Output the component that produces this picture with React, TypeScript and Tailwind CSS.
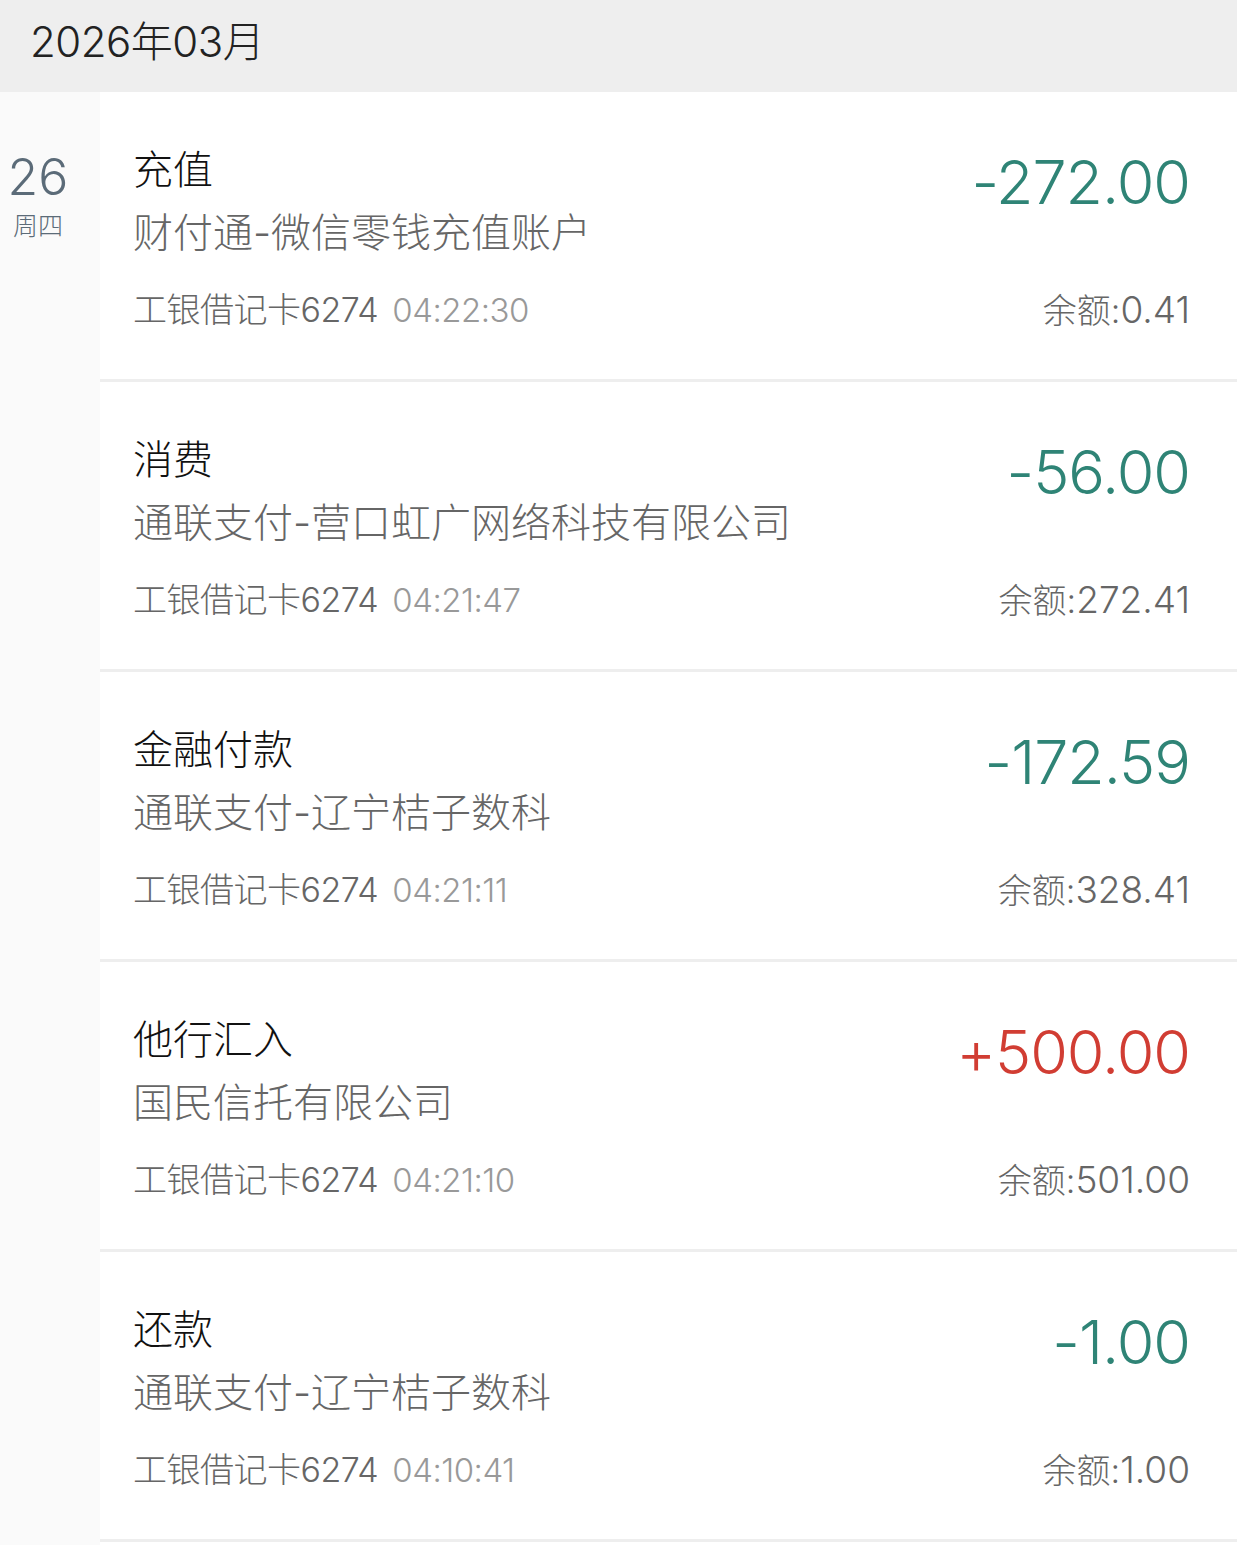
import React from "react";

type Tx = {
  title: string;
  sub: string;
  time: string;
  amount: string;
  balance: string;
  income?: boolean;
};

const txs: Tx[] = [
  { title: "充值", sub: "财付通-微信零钱充值账户", time: "04:22:30", amount: "-272.00", balance: "0.41" },
  { title: "消费", sub: "通联支付-营口虹广网络科技有限公司", time: "04:21:47", amount: "-56.00", balance: "272.41" },
  { title: "金融付款", sub: "通联支付-辽宁桔子数科", time: "04:21:11", amount: "-172.59", balance: "328.41" },
  { title: "他行汇入", sub: "国民信托有限公司", time: "04:21:10", amount: "+500.00", balance: "501.00", income: true },
  { title: "还款", sub: "通联支付-辽宁桔子数科", time: "04:10:41", amount: "-1.00", balance: "1.00" },
];

const font = { fontFamily: 'Inter, "Noto Sans CJK SC", sans-serif' };

export default function App() {
  return (
    <div className="w-[1237px] h-[1545px] bg-white overflow-hidden" style={font}>
      <div className="h-[92px] bg-[#eeeeee] flex items-center pl-[30px] pb-[10px] text-[42px] text-[#222222] font-light tracking-[-0.5px]">
        2026年03月
      </div>
      <div className="flex">
        <div className="w-[100px] shrink-0 bg-[#fafafa] flex flex-col items-center pt-[55px] min-h-[1453px]">
          <div className="text-[50px] leading-[60px] text-[#5b6b78] font-light pr-[24px]">26</div>
          <div className="text-[25px] leading-[30px] text-[#5b6b78] font-light mt-[4px] pr-[24px]">周四</div>
        </div>
        <div className="flex-1">
          {txs.map((t, i) => (
            <div key={i} className="h-[290px] border-b-[3px] border-[#eeeeee] flex justify-between pl-[33px] pr-[47px]">
              <div className="flex flex-col pt-[54px]">
                <div className="text-[40px] leading-[48px] text-[#111111] font-light">{t.title}</div>
                <div className="text-[40px] leading-[48px] text-[#666666] font-light mt-[15px] whitespace-nowrap">{t.sub}</div>
                <div className="text-[34px] leading-[40px] mt-[33px] whitespace-nowrap font-light tracking-[-0.5px]">
                  <span className="text-[#666666]">工银借记卡6274</span>
                  <span className="text-[#999999] ml-[14px] text-[33px]">{t.time}</span>
                </div>
              </div>
              <div className="flex flex-col items-end pt-[55px]">
                <div className={`text-[61px] leading-[70px] font-light tracking-[-1px] ${t.income ? "text-[#d13d33]" : "text-[#2f8476]"}`}>
                  {t.amount}
                </div>
                <div className="text-[34px] leading-[40px] mt-[73px] text-[#666666] font-light whitespace-nowrap">
                  余额:<span className="text-[37px]">{t.balance}</span>
                </div>
              </div>
            </div>
          ))}
        </div>
      </div>
    </div>
  );
}
